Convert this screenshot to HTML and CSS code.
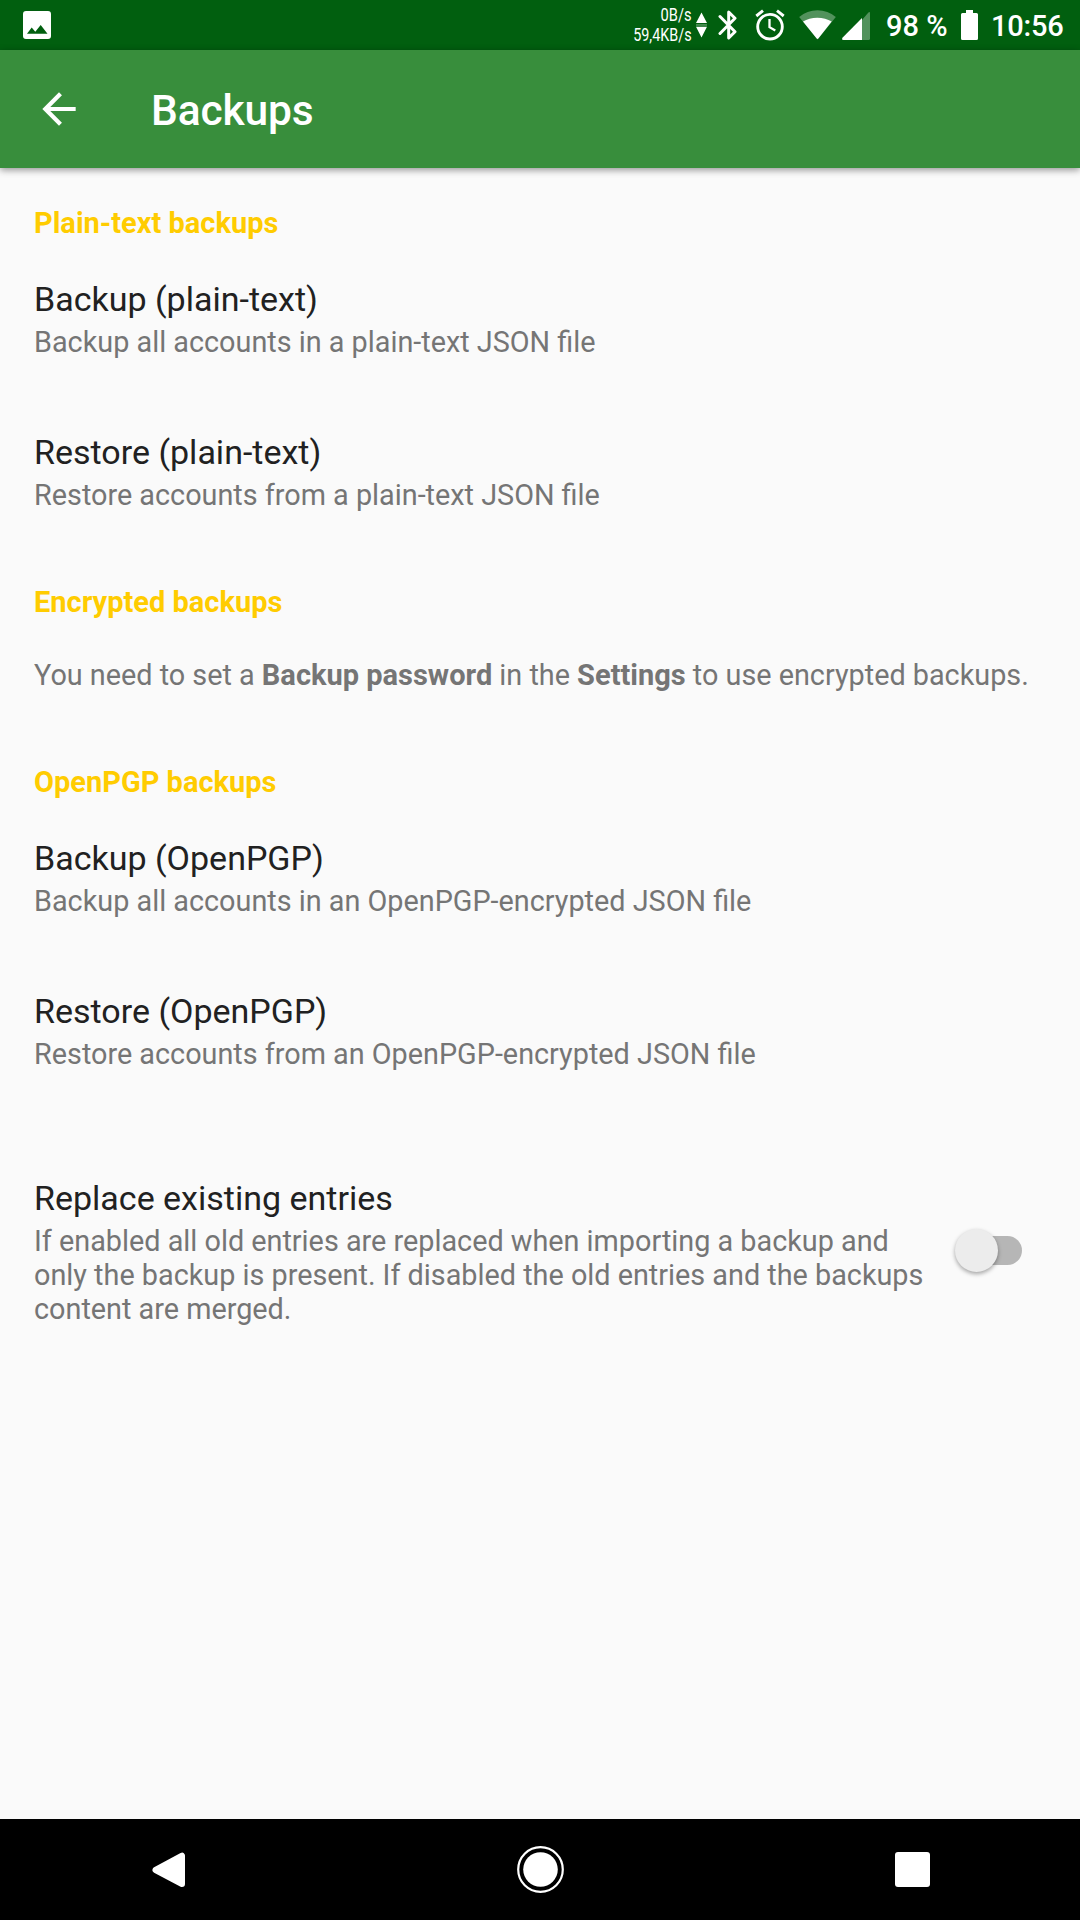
FILE: index.html
```html
<!DOCTYPE html>
<html lang="en">
<head>
<meta charset="utf-8">
<title>Backups</title>
<link rel="stylesheet" href="styles.css">
</head>
<body>
<div class="screen">
  <div class="status-bar">
    <svg class="notification" width="28" height="28" viewBox="0 0 28 28"><path fill="#fff" fill-rule="evenodd" d="M3 0H25Q28 0 28 3V25Q28 28 25 28H3Q0 28 0 25V3Q0 0 3 0ZM4 22.8H24.5L17.7 14 12.3 20.7 8.7 16.5Z"/></svg>
    <svg class="traffic" width="76" height="50" viewBox="632 0 76 50" fill="#fff">
      <text x="660.6" y="21.3" textLength="31" lengthAdjust="spacingAndGlyphs">0B/s</text>
      <text x="633.2" y="41.2" textLength="58.4" lengthAdjust="spacingAndGlyphs">59,4KB/s</text>
      <path d="M696 23 701.5 12.6 707 23ZM696 26.8H707L701.5 37.5Z"/><path d="M696 24.2H707V25.7H696Z" opacity=".35"/>
    </svg>
    <svg class="bluetooth" width="20" height="50" viewBox="718 0 20 50" fill="none" stroke="#fff" stroke-width="3" stroke-linejoin="round" stroke-linecap="round"><path d="M720 16.5 735 31.8 728.7 38V12L735 18.2 720 33.5"/></svg>
    <svg class="alarm" width="30" height="50" viewBox="755 0 30 50" fill="none" stroke="#fff" stroke-width="2.9"><circle cx="770" cy="26.7" r="12.3"/><path d="M756.3 16 763 10.7M777 10.7 783.7 16"/><path stroke-width="2.3" d="M769.5 19V27.2L775.3 30.6"/></svg>
    <svg class="wifi" width="38" height="50" viewBox="798 0 38 50" fill="#fff"><path opacity=".32" d="M799.2 17Q807 10.2 817.5 10.2T835.8 17L817.5 39.6Z"/><path d="M803 21.6Q809 17.8 817.3 17.8T831.7 21.6L818.5 38.3Q817.5 39.6 816.5 38.3Z"/></svg>
    <svg class="signal" width="28" height="50" viewBox="842 0 28 50" fill="#fff"><path opacity=".32" d="M862 20 868.2 12.8Q870 11 870 13.5V38.5Q870 40 868.5 40H862Z"/><path d="M862 18V40H843.5Q841 40 842.7 37.5Z"/></svg>
    <span class="percent">98 %</span>
    <svg class="battery" width="17" height="30" viewBox="0 0 17 30"><path fill="#fff" d="M5 0H12V3H15.5Q17 3 17 4.5V28.5Q17 30 15.5 30H1.5Q0 30 0 28.5V4.5Q0 3 1.5 3H5Z"/></svg>
    <span class="clock">10:56</span>
  </div>
  <header class="app-bar">
    <svg width="50" height="50" viewBox="0 0 24 24"><path fill="#fff" d="M20 11H7.83l5.59-5.59L12 4l-8 8 8 8 1.41-1.41L7.83 13H20v-2z"/></svg>
    <h1>Backups</h1>
  </header>
  <main class="content">
    <h2>Plain-text backups</h2>
    <div class="item"><div class="title">Backup (plain-text)</div><p>Backup all accounts in a plain-text JSON file</p></div>
    <div class="item last"><div class="title">Restore (plain-text)</div><p>Restore accounts from a plain-text JSON file</p></div>
    <h2>Encrypted backups</h2>
    <p class="notice">You need to set a <b>Backup password</b> in the <b>Settings</b> to use encrypted backups.</p>
    <h2>OpenPGP backups</h2>
    <div class="item"><div class="title">Backup (OpenPGP)</div><p>Backup all accounts in an OpenPGP-encrypted JSON file</p></div>
    <div class="item"><div class="title">Restore (OpenPGP)</div><p>Restore accounts from an OpenPGP-encrypted JSON file</p></div>
    <div class="option">
      <div><div class="title">Replace existing entries</div><p>If enabled all old entries are replaced when importing a backup and<br>only the backup is present. If disabled the old entries and the backups<br>content are merged.</p></div>
      <div class="switch"><div class="thumb"></div></div>
    </div>
  </main>
  <nav class="nav-bar">
    <svg width="35" height="36" viewBox="0 0 35 36"><path fill="#fff" stroke="#fff" stroke-width="6" stroke-linejoin="round" d="M4.5 18 31 3.7V32Z"/></svg>
    <svg width="48" height="48" viewBox="0 0 48 48"><circle cx="23.5" cy="23.5" r="22.3" fill="none" stroke="#fff" stroke-width="2.2"/><circle cx="23.5" cy="23.5" r="17.3" fill="#fff"/></svg>
    <div class="recents"></div>
  </nav>
</div>
</body>
</html>
```
FILE: styles.css
```css
* { box-sizing: border-box; margin: 0; padding: 0; }
body { background: #fafafa; font-family: Roboto, sans-serif; }
svg { display: block; flex: none; }
.screen { width: 1080px; height: 1920px; display: flex; flex-direction: column; overflow: hidden; }
.status-bar { height: 50px; flex: none; background: #015f0f; color: #fff; display: flex; align-items: center; padding-left: 23px; font-size: 29px; font-weight: 500; line-height: 50px; white-space: nowrap; }
.traffic { margin-left: 581px; font-size: 17.5px; font-weight: 400; }
.bluetooth { margin-left: 10px; }
.alarm { margin-left: 17px; }
.wifi { margin-left: 13px; }
.signal { margin-left: 6px; }
.percent { width: 75px; margin-left: 16px; padding-top: 2px; }
.clock { margin-left: 13px; padding-top: 2px; letter-spacing: -.2px; }
.app-bar { height: 118px; flex: none; background: #388e3c; color: #fff; display: flex; align-items: center; padding-left: 34px; gap: 67px; box-shadow: 0 2px 7px rgba(0,0,0,.42); }
h1 { font-size: 42.5px; font-weight: 500; line-height: 50px; padding-top: 4px; letter-spacing: -.15px; }
.content { flex: 1; padding: 38px 34px 0; color: #757575; font-size: 28.8px; line-height: 34px; white-space: nowrap; }
h2 { font-size: 29px; line-height: 34px; font-weight: 700; color: #ffcc00; margin-bottom: 39px; }
b { font-size: 29px; line-height: 1; }
.title { font-size: 34px; line-height: 40px; color: #212121; margin-bottom: 6px; }
.item { margin-bottom: 73px; }
.notice { margin-bottom: 73px; }
.option { display: flex; align-items: center; justify-content: space-between; padding: 34px 24px 0 0; }
.switch { width: 61px; height: 29px; margin-bottom: 3px; border-radius: 15px; background: #b6b6b6; display: flex; align-items: center; }
.thumb { width: 43px; height: 43px; flex: none; margin-left: -6px; border-radius: 50%; background: #ececec; box-shadow: 0 2px 4px rgba(0,0,0,.35); }
.nav-bar { height: 101px; flex: none; background: #000; display: flex; align-items: center; justify-content: space-between; padding: 0 150px 0 151px; }
.recents { width: 35px; height: 35px; border-radius: 3px; background: #fff; }
```
